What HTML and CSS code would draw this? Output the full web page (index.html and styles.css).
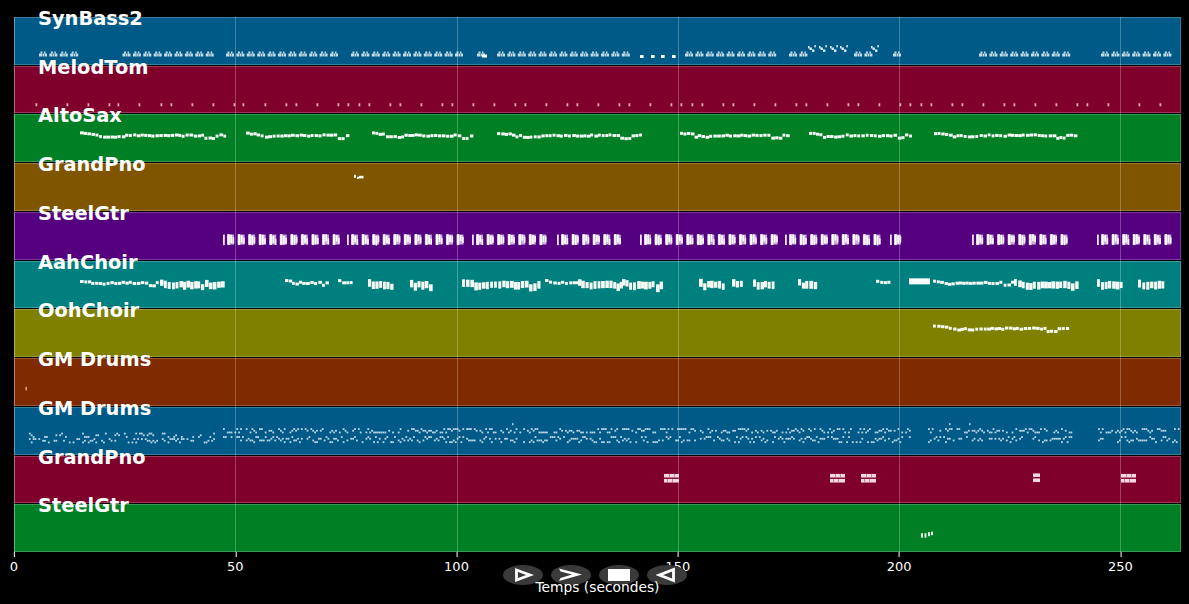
FILE: index.html
```html
<!DOCTYPE html>
<html lang="fr">
<head>
  <meta charset="UTF-8">
  <meta name="viewport" content="width=device-width, initial-scale=1.0">
  <title>Piano roll</title>
  <link rel="stylesheet" href="styles.css">
</head>
<body>

<div class="figure">
  <!-- pistes : les notes sont ajoutees par notes.js -->
  <div class="plot" id="plot">
    <div class="track track-blue"><span class="track-name">SynBass2</span></div>
    <div class="track track-crimson"><span class="track-name">MelodTom</span></div>
    <div class="track track-green"><span class="track-name">AltoSax</span></div>
    <div class="track track-brown"><span class="track-name">GrandPno</span></div>
    <div class="track track-purple"><span class="track-name">SteelGtr</span></div>
    <div class="track track-teal"><span class="track-name">AahChoir</span></div>
    <div class="track track-olive"><span class="track-name">OohChoir</span></div>
    <div class="track track-rust"><span class="track-name">GM Drums</span></div>
    <div class="track track-blue"><span class="track-name">GM Drums</span></div>
    <div class="track track-crimson"><span class="track-name">GrandPno</span></div>
    <div class="track track-green"><span class="track-name">SteelGtr</span></div>

    <div class="grid-line" style="left: 0"></div>
    <div class="grid-line" style="left: 18.96%"></div>
    <div class="grid-line" style="left: 37.92%"></div>
    <div class="grid-line" style="left: 56.88%"></div>
    <div class="grid-line" style="left: 75.84%"></div>
    <div class="grid-line" style="left: 94.8%"></div>
  </div>

  <div class="axis">
    <span class="tick" style="left: 0">0</span>
    <span class="tick" style="left: 18.96%">50</span>
    <span class="tick" style="left: 37.92%">100</span>
    <span class="tick" style="left: 56.88%">150</span>
    <span class="tick" style="left: 75.84%">200</span>
    <span class="tick" style="left: 94.8%">250</span>
  </div>
  <div class="axis-label">Temps (secondes)</div>
</div>

<!-- boutons de lecture -->
<div class="controls">
  <button class="control" aria-label="Lecture">
    <svg width="22" height="16" viewBox="0 0 22 16"><path d="M4.5 3 L18 8 L4.5 13 Z" fill="none" stroke="#fff" stroke-width="2.8"/></svg>
  </button>
  <button class="control" aria-label="Suivant">
    <svg width="26" height="16" viewBox="0 0 26 16"><path d="M1 1.5 L24 7.5 L1 14 L2.5 11 L14 7.5 L2.5 4.5 Z" fill="#fff"/></svg>
  </button>
  <button class="control" aria-label="Stop">
    <svg width="22" height="12" viewBox="0 0 22 12"><rect x="0" y="0" width="22" height="12" fill="#fff"/></svg>
  </button>
  <button class="control" aria-label="Retour">
    <svg width="22" height="16" viewBox="0 0 22 16"><path d="M17.5 2.5 L3.5 8 L17.5 13.5 Z" fill="none" stroke="#fff" stroke-width="2.8"/></svg>
  </button>
</div>

<script src="notes.js"></script>

</body>
</html>
```

FILE: styles.css
```css
* {
  box-sizing: border-box;
}

body {
  margin: 0;
  height: 604px;
  overflow: hidden;
  background-color: #000;
  color: #fff;
  font-family: "DejaVu Sans", sans-serif;
}

.figure {
  display: flex;
  flex-direction: column;
  padding: 17px 8px 0 14px;
}

/* pistes */
.plot {
  position: relative;
  display: grid;
  grid-auto-rows: 1fr;
  gap: 1px;
  height: 535px;
}

.track {
  position: relative;
  border: 1px solid rgba(255, 255, 255, 0.22);
}

.track-blue { background-color: #005a87; }
.track-crimson { background-color: #7f002a; }
.track-green { background-color: #007f24; }
.track-brown { background-color: #7f5500; }
.track-purple { background-color: #55007f; }
.track-teal { background-color: #007f7f; }
.track-olive { background-color: #7f7f00; }
.track-rust { background-color: #7f2a00; }

.track-name {
  position: absolute;
  top: -10px;
  left: 23px;
  z-index: 2;
  font-size: 19.4px;
  font-weight: bold;
  line-height: 22px;
  white-space: nowrap;
}

.notes {
  position: absolute;
  top: -1px;
  left: -1px;
  width: 1167px;
  height: 48px;
  overflow: visible;
}

.grid-line {
  position: absolute;
  top: 0;
  bottom: 0;
  width: 1px;
  background-color: rgba(255, 255, 255, 0.25);
}

/* axe du temps */
.axis {
  position: relative;
  height: 27px;
}

.tick {
  position: absolute;
  top: 7px;
  font-size: 13px;
  line-height: 16px;
  transform: translateX(-50%);
}

.tick::before {
  content: "";
  position: absolute;
  top: -7px;
  left: 50%;
  width: 1px;
  height: 5px;
  background-color: #fff;
}

.axis-label {
  position: relative;
  z-index: 2;
  font-size: 13.8px;
  line-height: 16px;
  text-align: center;
}

/* boutons */
.controls {
  position: absolute;
  top: 565px;
  left: 503px;
  display: flex;
  gap: 8px;
}

.control {
  display: flex;
  justify-content: center;
  align-items: center;
  width: 40px;
  height: 20px;
  padding: 0;
  border: none;
  border-radius: 50%;
  background-color: #3a3a3a;
  cursor: pointer;
}
```

FILE: notes.js
```js
// coordonnees en pixels de la page, ramenees a chaque piste plus bas
var PLOT_LEFT = 14, PLOT_TOP = 17, PITCH = 48.73;

var seed = 7;
function rnd() {
  seed = (seed * 16807) % 2147483647;
  return seed / 2147483647;
}

var svgNs = "http://www.w3.org/2000/svg";
var tracks = document.querySelectorAll(".track");

function rect(g, x, y, w, h, fill) {
  var r = document.createElementNS(svgNs, "rect");
  r.setAttribute("x", x);
  r.setAttribute("y", y);
  r.setAttribute("width", w);
  r.setAttribute("height", h);
  r.setAttribute("fill", fill);
  g.appendChild(r);
}

function layer(i) {
  var svg = document.createElementNS(svgNs, "svg");
  svg.setAttribute("class", "notes");
  var g = document.createElementNS(svgNs, "g");
  g.setAttribute("transform", "translate(" + (-PLOT_LEFT) + " " + (-(PLOT_TOP + i * PITCH)) + ")");
  svg.appendChild(g);
  tracks[i].appendChild(svg);
  return g;
}

// motif de basse : deux petites pointes
function bassMotif(g, x, y) {
  var c = "#c6dbe8";
  rect(g, x + 1.5, y, 2, 2, c);
  rect(g, x + 5, y, 1.5, 2, c);
  rect(g, x, y + 2, 3, 3, c);
  rect(g, x + 3.5, y + 2, 1.5, 3, c);
  rect(g, x + 5.5, y + 2, 2.5, 3, c);
}

function bassRow(g, from, to, y) {
  for (var x = from; x <= to; x += 10.4) bassMotif(g, x, y);
}

// contour de la melodie sur une phrase (p de 0 a 1)
function contour(p) {
  if (p < 0.12) return -2 + p * 10;
  if (p < 0.3) return 1.5 - rnd();
  if (p < 0.85) return 0;
  if (p < 0.93) return 2.5;
  return 0;
}

function melody(g, from, to, y, h, thick) {
  for (var x = from; x < to; x += 3.2 + rnd() * 1.2) {
    var p = (x - from) / (to - from);
    var dy = contour(p) + (rnd() - 0.5) * 1.4;
    rect(g, x, y + dy, 2.8 + rnd(), thick ? h + 3 + rnd() * 2 : h, "#f4f9f4");
  }
}

// groupe de guitare : colonnes serrees
function guitarRow(g, from, to) {
  rect(g, from, 234.5, 1.8, 10.5, "#f4e8fa");
  for (var x = from + 4; x < to; x += 10.55) {
    rect(g, x, 234.5, 7, 10, "#cba8de");
    rect(g, x + 0.5, 234, 2.2, 11, "#ffffff");
    rect(g, x + 3.4, 234 + rnd() * 2, 1.6, 6 + rnd() * 4, "#ffffff");
    rect(g, x + 5.6, 236 + rnd() * 3, 1.6, 6, "#ffffff");
  }
}

function drums(g, from, to, rows, fill) {
  for (var x = from; x < to; x += 1.9) {
    for (var r = 0; r < rows.length; r++) {
      if (rnd() < rows[r][1]) {
        rect(g, x, rows[r][0] + Math.floor(rnd() * rows[r][2]) * 1.7, 1.8, 1.8, fill);
      }
    }
  }
}

function chordBlock(g, x, w, y1, y2) {
  rect(g, x, y1, w, 3.6, "#f6d8e2");
  rect(g, x, y2, w, 3.6, "#f6d8e2");
  for (var i = 5; i < w; i += 5) {
    rect(g, x + i, y1, 0.8, 3.6, "#c06c86");
    rect(g, x + i - 2, y2, 0.8, 3.6, "#c06c86");
  }
}

// SynBass2
var g0 = layer(0);
[[39, 72], [122.5, 211], [226, 337], [351, 462], [497, 628], [685, 773], [789, 800], [854, 866], [979, 1063], [1101, 1172]].forEach(function (r) {
  bassRow(g0, r[0], r[1], 51.5);
});
bassMotif(g0, 477, 51.5);
rect(g0, 482, 54.5, 5, 3, "#ffffff");
bassMotif(g0, 893, 51.5);
[640, 651, 661, 672].forEach(function (x) {
  rect(g0, x, 55, 3.6, 3, "#ffffff");
});
[808, 819, 830, 840, 871].forEach(function (x) {
  rect(g0, x, 46, 1.6, 2.4, "#e6eff5");
  rect(g0, x + 1.5, 47.5, 2.4, 2.4, "#e6eff5");
  rect(g0, x + 4, 49.5, 2.4, 2.4, "#e6eff5");
  rect(g0, x + 6.4, 45, 1.4, 2.4, "#e6eff5");
});

// MelodTom
var g1 = layer(1);
[36, 67, 88, 109, 118, 139, 161, 171, 192, 213, 234, 243, 265, 286, 296, 317, 338, 348, 359, 369, 390, 400, 421, 442, 452, 473, 494, 515, 525, 546, 567, 577, 598, 619, 629, 650, 671, 681, 692, 702, 723, 733, 754, 775, 796, 806, 827, 848, 858, 879, 900, 910, 921, 931, 952, 962, 983, 1004, 1014, 1035, 1056, 1077, 1087, 1108, 1139, 1160].forEach(function (x) {
  rect(g1, x - 0.5, 103, 1.8, 3, "#e8a9bd");
});

// AltoSax
var g2 = layer(2);
[[80, 225], [246, 350], [372, 473], [497, 640], [680, 787], [809, 911], [934, 1074]].forEach(function (r) {
  melody(g2, r[0], r[1], 134.5, 3, false);
});

// GrandPno
var g3 = layer(3);
rect(g3, 354, 175, 2, 3, "#ffffff");
rect(g3, 357, 177, 2, 2, "#ffffff");
rect(g3, 359, 176, 4.5, 2.6, "#ffffff");

// SteelGtr
var g4 = layer(4);
[[223, 338], [347, 463], [472, 549], [557, 628], [640, 776], [785, 880], [890, 900], [972, 1066], [1097, 1176]].forEach(function (r) {
  guitarRow(g4, r[0], r[1] - 5);
});

// AahChoir
var g5 = layer(5);
[[80, 160, 0], [160, 205, 1], [205, 225, 1], [285, 327, 0], [338, 350, 0], [368, 392, 1], [410, 431, 1], [462, 540, 1], [545, 578, 0], [578, 622, 1], [622, 662, 1], [699, 725, 1], [732, 740, 1], [753, 775, 1], [798, 817, 1], [876, 888, 0], [933, 1014, 0], [1014, 1078, 1], [1097, 1120, 1], [1138, 1163, 1]].forEach(function (r) {
  melody(g5, r[0], r[1], 281, 3, r[2] === 1);
});
rect(g5, 909, 278, 21, 6, "#ffffff");

// OohChoir
var g6 = layer(6);
melody(g6, 933, 1066, 327.5, 3, false);

// GM Drums
var g7 = layer(7);
rect(g7, 25.5, 387, 1.4, 3.5, "#e8b090");

var g8 = layer(8);
var drumColor = "#bcd6e6";
drums(g8, 27, 215, [[432.5, 0.4, 3], [438, 0.65, 3]], drumColor);
drums(g8, 223, 910, [[428, 0.7, 3], [436, 0.75, 4]], drumColor);
drums(g8, 928, 1072, [[428, 0.7, 3], [436, 0.75, 4]], drumColor);
drums(g8, 1098, 1179, [[428, 0.7, 3], [436, 0.75, 4]], drumColor);
[512, 949, 969].forEach(function (x) {
  rect(g8, x, 423, 1.5, 2, drumColor);
});

// GrandPno
var g9 = layer(9);
chordBlock(g9, 664, 15, 473.5, 478.5);
chordBlock(g9, 830, 15, 473.5, 478.5);
chordBlock(g9, 861, 15, 473.5, 478.5);
rect(g9, 1033, 473, 7, 3.6, "#f6d8e2");
rect(g9, 1033, 478, 7, 3.6, "#f6d8e2");
chordBlock(g9, 1121, 15, 473.5, 478.5);

// SteelGtr
var g10 = layer(10);
rect(g10, 921, 533.5, 2, 4.5, "#e6f4e6");
rect(g10, 924.5, 533.5, 2, 4.5, "#e6f4e6");
rect(g10, 928, 532.5, 2, 4, "#e6f4e6");
rect(g10, 931, 532, 2, 3.5, "#e6f4e6");
```
